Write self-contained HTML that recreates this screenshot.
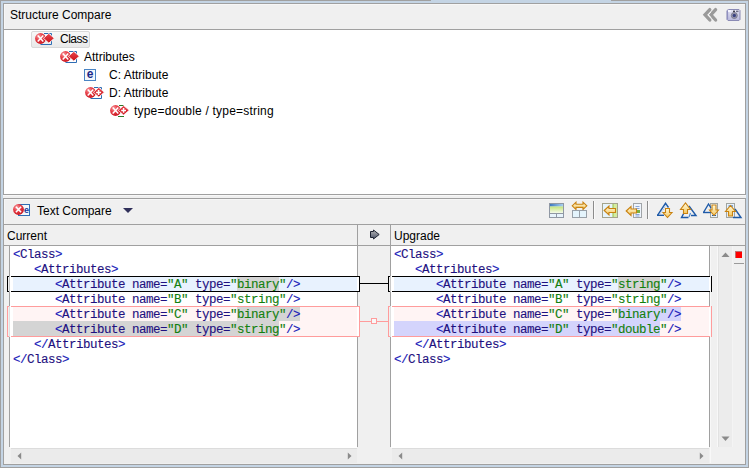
<!DOCTYPE html>
<html><head><meta charset="utf-8">
<style>
*{box-sizing:border-box}
html,body{margin:0;padding:0}
body{width:749px;height:468px;overflow:hidden;position:relative;background:#c4d4e4;font-family:"Liberation Sans",sans-serif;font-size:12px;color:#000}
.a{position:absolute}
.frame{left:0;top:0;width:749px;height:468px;border:1px solid #a0a0a0}
.panel{background:#f0f0f0;border:1px solid #a0a0a0}
.hl{background:#f7f7f7}
.g{background:#a0a0a0}
.w{background:#fff}
.txt{white-space:pre;line-height:14px}
.code{font-family:"Liberation Mono",monospace;font-size:12.5px;letter-spacing:-0.5px;line-height:15px;-webkit-text-stroke:0.12px;white-space:pre;color:#1e1080}
.code .d{color:#1818b8}
.code .v{color:#12800e}
</style></head><body>
<svg width="0" height="0" style="position:absolute">
<defs>
<radialGradient id="rg" cx="0.35" cy="0.3" r="0.75"><stop offset="0" stop-color="#f7a0a4"/><stop offset="0.45" stop-color="#e8414a"/><stop offset="1" stop-color="#c8141e"/></radialGradient>
<linearGradient id="dg" x1="0" y1="0" x2="0" y2="1"><stop offset="0" stop-color="#e84850"/><stop offset="1" stop-color="#cc1018"/></linearGradient>
<g id="cx">
<circle cx="5.5" cy="6.5" r="5.4" fill="url(#rg)"/>
<path d="M2.7 3.6L8.3 9.4M8.3 3.6L2.7 9.4" stroke="#fff" stroke-width="1.5"/>
</g>
<g id="ic1">
<path d="M9 1.5H16.5V12.5H5.5" fill="none" stroke="#2e6db4" stroke-width="1"/>
<use href="#cx"/>
<path d="M8.4 6.3L13.8 1.4L19.3 6.3L13.8 11.1Z" fill="url(#dg)" stroke="#fff" stroke-width="0.8"/>
</g>
<g id="ic2">
<path d="M9 1.5H16.5V12.5H5.5" fill="none" stroke="#2e6db4" stroke-width="1"/>
<use href="#cx"/>
<path d="M8.4 6.3L13.8 1.4L19.3 6.3L13.8 11.1Z" fill="url(#dg)" stroke="#fff" stroke-width="0.8"/>
<path d="M13.6 4V9M11.1 6.5H16.1" stroke="#fff" stroke-width="1.6"/>
</g>
<g id="ic3">
<path d="M9 1.5H14M8 12.5H14" fill="none" stroke="#2a7a2a" stroke-width="1.1"/>
<use href="#cx"/>
<path d="M8.2 6.3L13.6 1.6L19.2 6.3L13.6 11Z" fill="url(#dg)" stroke="#fff" stroke-width="0.7"/>
<path d="M13.6 4V8.8M11.2 6.4H16" stroke="#fff" stroke-width="1.5"/>
</g>
<linearGradient id="og" x1="0" y1="0" x2="0" y2="1"><stop offset="0" stop-color="#fffbe0"/><stop offset="1" stop-color="#f5c860"/></linearGradient>
<linearGradient id="ogh" x1="0" y1="0" x2="1" y2="0"><stop offset="0" stop-color="#fff8d8"/><stop offset="1" stop-color="#f3c860"/></linearGradient>
<linearGradient id="grg" x1="0" y1="0" x2="0" y2="1"><stop offset="0" stop-color="#c4e47a"/><stop offset="1" stop-color="#f8fcf2"/></linearGradient>
<linearGradient id="bbar" x1="0" y1="0" x2="1" y2="0"><stop offset="0" stop-color="#3c78c0"/><stop offset="1" stop-color="#a8d0f0"/></linearGradient>
<linearGradient id="ag" x1="0" y1="0" x2="0" y2="1"><stop offset="0" stop-color="#b8b8b8"/><stop offset="1" stop-color="#4a5268"/></linearGradient>
<linearGradient id="cam" x1="0" y1="0" x2="0" y2="1"><stop offset="0" stop-color="#e4e4f4"/><stop offset="1" stop-color="#b8b8dc"/></linearGradient>
</defs></svg>
<div class="a frame"></div>
<div class="a" style="left:431px;top:0;width:180px;height:1px;background:#c4d4e4"></div>

<!-- ============ Upper panel: Structure Compare ============ -->
<div class="a panel" style="left:3px;top:3px;width:743px;height:192px"></div>
<div class="a hl" style="left:4px;top:4px;width:741px;height:1px"></div>
<div class="a hl" style="left:4px;top:4px;width:1px;height:25px"></div>
<div class="a g" style="left:4px;top:29px;width:741px;height:1px"></div>
<div class="a w" style="left:4px;top:30px;width:741px;height:164px"></div>
<div class="a txt" style="left:10px;top:8px">Structure Compare</div>

<svg class="a" style="left:701px;top:6px" width="18" height="18">
<path d="M14.6 3.6L9.8 8.8L14.6 14" fill="none" stroke="#9a9a9a" stroke-width="3.3" stroke-linecap="round"/>
<path d="M8.8 3.6L4 8.8L8.8 14" fill="none" stroke="#9a9a9a" stroke-width="3.3" stroke-linecap="round"/>
<path d="M9.8 6.2L7.4 8.8L9.8 11.4" fill="none" stroke="#ffffff" stroke-width="0.9"/>
</svg>
<svg class="a" style="left:725px;top:8px" width="16" height="14">
<path d="M2 2.5L3.5 1.5H14L15 2.5V11.5L14 12.5H3L2 11.5Z" fill="url(#cam)" stroke="#8a8ab4" stroke-width="1"/>
<path d="M2.5 3V11.5" stroke="#9090c0" stroke-width="1.2"/>
<rect x="3" y="2" width="3" height="2" fill="#f4f4ff"/>
<rect x="6.5" y="2.2" width="6" height="1.3" fill="#ececf8"/>
<circle cx="9.3" cy="7.5" r="3" fill="#9c9cb4" stroke="#707080" stroke-width="0.8"/>
<circle cx="9.3" cy="7.5" r="1.7" fill="#3a4280"/>
<rect x="8" y="2.6" width="2" height="1.5" fill="#404050"/>
<rect x="11" y="2.6" width="2.5" height="1.5" fill="#707088"/>
</svg>
<!-- tree -->
<div class="a" style="left:31px;top:31px;width:59px;height:17px;border:1px solid #d9d9d9;border-radius:2px;background:linear-gradient(#f8f8f8,#e9e9e9)"></div>
<svg class="a" style="left:35px;top:32px" width="20" height="14"><use href="#ic1"/></svg>
<div class="a txt" style="left:60px;top:32px;letter-spacing:-0.5px">Class</div>
<svg class="a" style="left:60px;top:50px" width="20" height="14"><use href="#ic1"/></svg>
<div class="a txt" style="left:84px;top:50px">Attributes</div>
<div class="a" style="left:84px;top:69px;width:12px;height:12px;border:1px solid #4a84c4;background:#f2f8fc"></div>
<div class="a" style="left:85px;top:67px;width:10px;height:14px;font:bold 12px 'Liberation Sans',sans-serif;color:#1a2a8a;text-align:center;line-height:14px">e</div>
<div class="a txt" style="left:109px;top:68px">C: Attribute</div>
<svg class="a" style="left:85px;top:86px" width="20" height="14"><use href="#ic2"/></svg>
<div class="a txt" style="left:109px;top:86px">D: Attribute</div>
<svg class="a" style="left:110px;top:104px" width="20" height="15"><use href="#ic3"/></svg>
<div class="a txt" style="left:134px;top:104px;letter-spacing:0.2px">type=double / type=string</div>


<!-- ============ Lower panel ============ -->
<div class="a" style="left:3px;top:195px;width:743px;height:3px;background:#f0f0f0;border-top:1px solid #f8f8f8"></div>
<div class="a panel" style="left:3px;top:198px;width:743px;height:267px"></div>
<div class="a hl" style="left:4px;top:199px;width:741px;height:1px"></div>
<div class="a hl" style="left:4px;top:199px;width:1px;height:25px"></div>
<div class="a g" style="left:4px;top:224px;width:741px;height:1px"></div>
<div class="a txt" style="left:37px;top:204px">Text Compare</div>
<svg class="a" style="left:12px;top:203px" width="20" height="15">
<rect x="6.5" y="1.5" width="11" height="11" fill="#f2f8fc" stroke="#2e6db4" stroke-width="1"/>
<text x="12" y="9.5" font-family="Liberation Sans" font-weight="bold" font-size="9" fill="#1a3a9a">e</text>
<circle cx="6.5" cy="6.5" r="5.4" fill="url(#rg)"/>
<path d="M3.9 3.7L9.1 9.3M9.1 3.7L3.9 9.3" stroke="#fff" stroke-width="1.6"/>
</svg>
<svg class="a" style="left:122px;top:207px" width="12" height="7"><path d="M1 1H11L6 6Z" fill="#30305a"/></svg>

<svg class="a" style="left:548px;top:202px" width="17" height="17">
<rect x="1.5" y="1.5" width="14" height="14" fill="#e8f4fc" stroke="#9098a4" stroke-width="1"/>
<rect x="2" y="2" width="13" height="2.5" fill="url(#bbar)"/>
<rect x="2" y="4.5" width="13" height="7" fill="url(#grg)"/>
<path d="M2 11.5H15M8.5 11.5V15" stroke="#9098a4" stroke-width="1"/>
</svg>
<svg class="a" style="left:571px;top:201px" width="17" height="18">
<path d="M1.2 4.8L5 1.2V3.2H12V1.2L15.8 4.8L12 8.4V6.4H5V8.4Z" fill="url(#og)" stroke="#c98210" stroke-width="1.1"/>
<rect x="1.5" y="9.5" width="14" height="7" fill="#e4f4fc" stroke="#98a0a8" stroke-width="1"/>
<path d="M8.5 9.5V16.5" stroke="#98a0a8" stroke-width="1"/>
</svg>
<div class="a" style="left:593px;top:201px;width:1px;height:18px;background:#8c8c8c"></div>
<div class="a" style="left:594px;top:201px;width:1px;height:18px;background:#fafafa"></div>
<svg class="a" style="left:601px;top:202px" width="18" height="17">
<rect x="1.5" y="1.5" width="15" height="14" fill="#e6f4fc" stroke="#a4a48c" stroke-width="1"/>
<rect x="12" y="2" width="4" height="13" fill="#d4eca0"/>
<path d="M12 2V15" stroke="#98c048" stroke-width="1"/>
<path d="M3.2 8.5L8 4V6.5H14.5V10.5H8V13Z" fill="url(#og)" stroke="#c98210" stroke-width="1.1"/>
</svg>
<svg class="a" style="left:625px;top:202px" width="18" height="17">
<rect x="8.5" y="1.5" width="8" height="14" fill="#eef4fc" stroke="#a0a4a8" stroke-width="1"/>
<path d="M10.5 4.5H14.5M10.5 6.5H14.5M10.5 12.5H14.5M10.5 14H14.5" stroke="#8aa6d8" stroke-width="1"/>
<rect x="11" y="8" width="4" height="3" fill="#78b040"/>
<path d="M1.2 9L6 4.5V7H11.5V11H6V13.5Z" fill="url(#og)" stroke="#c98210" stroke-width="1.1"/>
</svg>
<div class="a" style="left:647px;top:201px;width:1px;height:18px;background:#8c8c8c"></div>
<div class="a" style="left:648px;top:201px;width:1px;height:18px;background:#fafafa"></div>

<svg class="a" style="left:655px;top:201px" width="19" height="18">
<path d="M2.5 14.3L10.5 2.3L13.5 6.5" fill="none" stroke="#1e5aa8" stroke-width="1.4"/>
<path d="M2 14.3H9" stroke="#1e5aa8" stroke-width="1.4"/>
<path d="M5.5 12.5L11.5 4" stroke="#7aa8e0" stroke-width="0.8" stroke-dasharray="1.2 1"/>
<path d="M10.5 7.5H14.5V11.5H17L12.5 16.5L8 11.5H10.5Z" fill="url(#og)" stroke="#c98210" stroke-width="1.1"/>
</svg>
<svg class="a" style="left:679px;top:201px" width="19" height="18">
<path d="M9.5 16.5H2.5L5.5 11" fill="none" stroke="#1e5aa8" stroke-width="1.4"/>
<path d="M10 5L17 14.5H12" fill="none" stroke="#1e5aa8" stroke-width="1.4"/>
<path d="M10 16l1.5-4" stroke="#4a88d0" stroke-width="1.2"/>
<path d="M4.5 12.5V8.5H1.5L6.5 2L11.5 8.5H8.5V12.5Z" fill="url(#og)" stroke="#c98210" stroke-width="1.1"/>
</svg>
<svg class="a" style="left:701px;top:201px" width="19" height="18">
<rect x="9.5" y="2.5" width="7" height="14" fill="#e8f2fc" stroke="#a0a4a0" stroke-width="1"/>
<path d="M2.5 11.5L7.5 3L10 7" fill="none" stroke="#1e5aa8" stroke-width="1.4"/>
<path d="M2 11.5H10" stroke="#1e5aa8" stroke-width="1.4"/>
<path d="M11 14.5H15" stroke="#1e5aa8" stroke-width="1"/>
<path d="M11 4H15V9H17.5L13 14.5L8.5 9H11Z" fill="url(#og)" stroke="#c98210" stroke-width="1.1"/>
</svg>
<svg class="a" style="left:724px;top:201px" width="19" height="18">
<rect x="2.5" y="2.5" width="8" height="14" fill="#e8f2fc" stroke="#a0a4a0" stroke-width="1"/>
<path d="M4.5 5H9" stroke="#1e5aa8" stroke-width="1"/>
<path d="M11 8L17 16.5H9" fill="none" stroke="#1e5aa8" stroke-width="1.4"/>
<path d="M4.5 15V10.5H1.5L6.5 4.5L11.5 10.5H8.5V15Z" fill="url(#og)" stroke="#c98210" stroke-width="1.1"/>
</svg>

<svg class="a" style="left:369px;top:229px" width="12" height="12">
<path d="M1.5 2.5H4.5V1L10.2 5.5L4.5 10V8.5H1.5Z" fill="url(#ag)" stroke="#1e2433" stroke-width="1"/>
</svg>


<!-- header row -->
<div class="a g" style="left:4px;top:245px;width:741px;height:1px"></div>
<div class="a txt" style="left:7px;top:229px">Current</div>
<div class="a txt" style="left:394px;top:229px">Upgrade</div>
<div class="a g" style="left:357px;top:225px;width:1px;height:222px"></div>
<div class="a g" style="left:390px;top:225px;width:1px;height:222px"></div>

<!-- left pane -->
<div class="a g" style="left:9px;top:246px;width:1px;height:201px"></div>
<div class="a w" style="left:10px;top:246px;width:347px;height:202px"></div>
<!-- right pane -->
<div class="a w" style="left:391px;top:246px;width:318px;height:202px"></div>
<div class="a g" style="left:709px;top:246px;width:1px;height:201px"></div>

<div class="a" style="left:13px;top:277px;width:344px;height:14px;background:#e8f2fe"></div>
<div class="a" style="left:13px;top:307px;width:344px;height:29px;background:#fff4f4"></div>
<div class="a" style="left:237px;top:277px;width:42px;height:14px;background:#d4d4d4"></div>
<div class="a" style="left:237px;top:306px;width:63px;height:15px;background:#d4d4d4"></div>
<div class="a" style="left:13px;top:321px;width:266px;height:15px;background:#d4d4d4"></div>
<div class="a" style="left:394px;top:277px;width:315px;height:14px;background:#e8f2fe"></div>
<div class="a" style="left:394px;top:307px;width:315px;height:29px;background:#fff4f4"></div>
<div class="a" style="left:618px;top:277px;width:42px;height:14px;background:#d4d4d4"></div>
<div class="a" style="left:618px;top:306px;width:63px;height:15px;background:#d4d4fc"></div>
<div class="a" style="left:394px;top:321px;width:266px;height:15px;background:#d4d4fc"></div>
<div class="a code" style="left:13px;top:248px"><span class="d">&lt;</span>Class<span class="d">&gt;</span></div>
<div class="a code" style="left:13px;top:263px">   <span class="d">&lt;</span>Attributes<span class="d">&gt;</span></div>
<div class="a code" style="left:13px;top:278px">      <span class="d">&lt;</span>Attribute name=<span class="v">"A"</span> type=<span class="v">"binary"</span><span class="d">/&gt;</span></div>
<div class="a code" style="left:13px;top:293px">      <span class="d">&lt;</span>Attribute name=<span class="v">"B"</span> type=<span class="v">"string"</span><span class="d">/&gt;</span></div>
<div class="a code" style="left:13px;top:308px">      <span class="d">&lt;</span>Attribute name=<span class="v">"C"</span> type=<span class="v">"binary"</span><span class="d">/&gt;</span></div>
<div class="a code" style="left:13px;top:323px">      <span class="d">&lt;</span>Attribute name=<span class="v">"D"</span> type=<span class="v">"string"</span><span class="d">/&gt;</span></div>
<div class="a code" style="left:13px;top:338px">   <span class="d">&lt;/</span>Attributes<span class="d">&gt;</span></div>
<div class="a code" style="left:13px;top:353px"><span class="d">&lt;/</span>Class<span class="d">&gt;</span></div>
<div class="a code" style="left:394px;top:248px"><span class="d">&lt;</span>Class<span class="d">&gt;</span></div>
<div class="a code" style="left:394px;top:263px">   <span class="d">&lt;</span>Attributes<span class="d">&gt;</span></div>
<div class="a code" style="left:394px;top:278px">      <span class="d">&lt;</span>Attribute name=<span class="v">"A"</span> type=<span class="v">"string"</span><span class="d">/&gt;</span></div>
<div class="a code" style="left:394px;top:293px">      <span class="d">&lt;</span>Attribute name=<span class="v">"B"</span> type=<span class="v">"string"</span><span class="d">/&gt;</span></div>
<div class="a code" style="left:394px;top:308px">      <span class="d">&lt;</span>Attribute name=<span class="v">"C"</span> type=<span class="v">"binary"</span><span class="d">/&gt;</span></div>
<div class="a code" style="left:394px;top:323px">      <span class="d">&lt;</span>Attribute name=<span class="v">"D"</span> type=<span class="v">"double"</span><span class="d">/&gt;</span></div>
<div class="a code" style="left:394px;top:338px">   <span class="d">&lt;/</span>Attributes<span class="d">&gt;</span></div>
<div class="a code" style="left:394px;top:353px"><span class="d">&lt;/</span>Class<span class="d">&gt;</span></div>
<div class="a" style="left:7px;top:276px;width:353px;height:16px;border:1px solid #000"></div>
<div class="a" style="left:9px;top:276px;width:1px;height:16px;background:#c8c8c8"></div>
<div class="a" style="left:10px;top:276px;width:1px;height:16px;background:#fff"></div>
<div class="a" style="left:357px;top:277px;width:2px;height:14px;background:#fff"></div>
<div class="a" style="left:360px;top:283px;width:28px;height:1px;background:#000"></div>
<div class="a" style="left:388px;top:276px;width:324px;height:16px;border:1px solid #000"></div>
<div class="a" style="left:390px;top:276px;width:1px;height:16px;background:#c8c8c8"></div>
<div class="a" style="left:391px;top:276px;width:1px;height:16px;background:#fff"></div>
<div class="a" style="left:709px;top:277px;width:2px;height:14px;background:#fff"></div>
<div class="a" style="left:7px;top:306px;width:353px;height:31px;border:1px solid #ff9c9c"></div>
<div class="a" style="left:9px;top:306px;width:1px;height:31px;background:#e0e0e0"></div>
<div class="a" style="left:10px;top:306px;width:1px;height:31px;background:#fff"></div>
<div class="a" style="left:357px;top:307px;width:2px;height:29px;background:#fff"></div>
<div class="a" style="left:360px;top:321px;width:28px;height:1px;background:#ff9c9c"></div>
<div class="a" style="left:371px;top:318px;width:6px;height:6px;border:1px solid #ff9c9c;background:#f8f8f8"></div>
<div class="a" style="left:388px;top:306px;width:324px;height:31px;border:1px solid #ff9c9c"></div>
<div class="a" style="left:390px;top:306px;width:1px;height:31px;background:#e0e0e0"></div>
<div class="a" style="left:391px;top:306px;width:1px;height:31px;background:#fff"></div>
<div class="a" style="left:709px;top:307px;width:2px;height:29px;background:#fff"></div>

<!-- scrollbars -->
<div class="a" style="left:11px;top:448px;width:346px;height:15px;background:#ebebeb;border-top:1px solid #dcdcdc"></div>
<svg class="a" style="left:16px;top:451px" width="7" height="10"><path d="M5.2 1.5V8.5L1.5 5Z" fill="#8a8a8a"/></svg>
<svg class="a" style="left:346px;top:451px" width="7" height="10"><path d="M1.8 1.5V8.5L5.5 5Z" fill="#8a8a8a"/></svg>
<div class="a" style="left:392px;top:448px;width:317px;height:15px;background:#ebebeb;border-top:1px solid #dcdcdc"></div>
<svg class="a" style="left:397px;top:451px" width="7" height="10"><path d="M5.2 1.5V8.5L1.5 5Z" fill="#8a8a8a"/></svg>
<svg class="a" style="left:698px;top:451px" width="7" height="10"><path d="M1.8 1.5V8.5L5.5 5Z" fill="#8a8a8a"/></svg>
<div class="a" style="left:710px;top:246px;width:1px;height:217px;background:#f8f8f8"></div>
<div class="a" style="left:717px;top:246px;width:16px;height:201px;background:#ececec;border-left:1px solid #f8f8f8;border-right:1px solid #f4f4f4"></div>
<div class="a" style="left:718px;top:246px;width:1px;height:201px;background:#e2e2e2"></div>
<svg class="a" style="left:720px;top:251px" width="11" height="8"><path d="M1.5 6H9.5L5.5 1.5Z" fill="#8a8a8a"/></svg>
<svg class="a" style="left:720px;top:435px" width="11" height="8"><path d="M1.5 1.5H9.5L5.5 6Z" fill="#8a8a8a"/></svg>
<div class="a" style="left:735px;top:251px;width:7px;height:7px;background:#ff0000;border-top:1px solid #c07070;border-left:1px solid #c07070"></div>
<div class="a" style="left:734px;top:263px;width:10px;height:1px;background:#9a9a9a"></div>
</body></html>
